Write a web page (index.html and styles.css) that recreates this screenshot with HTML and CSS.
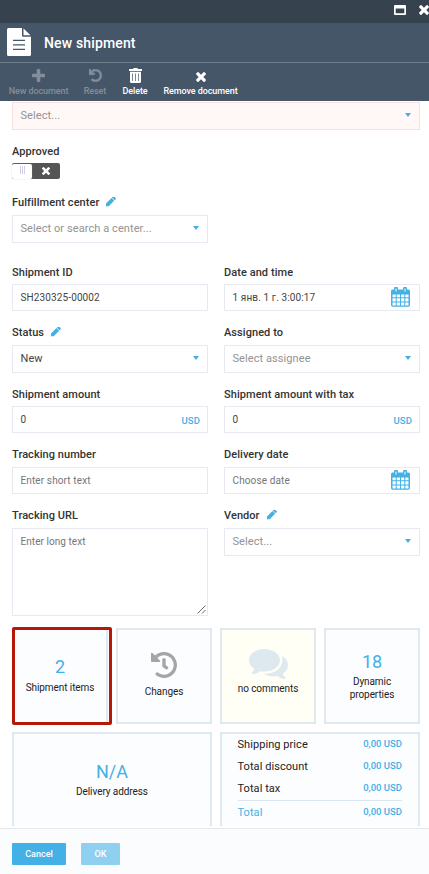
FILE: index.html
```
<!DOCTYPE html>
<html lang="en">
<head>
<meta charset="utf-8">
<title>New shipment</title>
<link rel="stylesheet" href="styles.css">
</head>
<body>
<svg class="defs" width="0" height="0">
  <symbol id="pencil" viewBox="128 256 1536 1536"><path d="M1014 608L1700 608z"/><path d="M960 416l416 416-832 832h-416v-416zm683 96q0 53-37 90l-166 166-416-416 166-165q36-38 90-38 53 0 91 38l235 234q37 39 37 91z"/></symbol>
  <symbol id="close" viewBox="302 366 1188 1188"><path d="M1490 1322q0 40-28 68l-136 136q-28 28-68 28t-68-28l-294-294-294 294q-28 28-68 28t-68-28l-136-136q-28-28-28-68t28-68l294-294-294-294q-28-28-28-68t28-68l136-136q28-28 68-28t68 28l294 294 294-294q28-28 68-28t68 28l136 136q28 28 28 68t-28 68l-294 294 294 294q28 28 28 68z"/></symbol>
  <symbol id="calendar" viewBox="0 0 19 20"><path fill-rule="evenodd" d="M1.5 2.5H3V1.5a1.5 1.5 0 0 1 4 0v1h5v-1a1.500 1.500 0 0 1 4 0v1h1.500A1.500 1.500 0 0 1 19 4v14a1.800 1.800 0 0 1-1.800 1.800H1.800A1.800 1.800 0 0 1 0 18V4a1.500 1.500 0 0 1 1.500-1.500zM4.500 1.500v3h1v-3zM13.500 1.500v3h1v-3zM1.500 7.500v2.700h3.200V7.500zM5.700 7.500v2.700h3.300V7.500zM10 7.500v2.700h3.300V7.500zM14.300 7.500v2.700h3.200V7.500zM1.500 11.200v3.200h3.200v-3.200zM5.700 11.200v3.200h3.300v-3.200zM10 11.200v3.200h3.300v-3.200zM14.300 11.200v3.200h3.200v-3.200zM1.500 15.400v3h3.200v-3zM5.700 15.400v3h3.300v-3zM10 15.400v3h3.300v-3zM14.300 15.400v3h3.200v-3z"/></symbol>
</svg>

<div class="window-bar">
  <svg class="win-max" viewBox="0 0 12 10"><path fill-rule="evenodd" d="M1 0h10a1 1 0 0 1 1 1v8a1 1 0 0 1-1 1H1a1 1 0 0 1-1-1V1a1 1 0 0 1 1-1zM1.700 3.500v4.800h8.600V3.500z"/></svg>
  <svg class="win-close"><use href="#close"/></svg>
</div>
<header class="title-bar">
  <svg class="doc-icon" viewBox="0 0 24 28"><path fill-rule="evenodd" d="M1.500 0H15v7.500a1.300 1.300 0 0 0 1.300 1.300H24v17.700a1.500 1.500 0 0 1-1.500 1.500h-21A1.500 1.500 0 0 1 0 26.500v-25A1.500 1.500 0 0 1 1.500 0zM6 11.700v1.300h12v-1.300zM6 16.200v1.300h12v-1.300zM6 20.700v1.300h12v-1.300z"/><path d="M16.500.5l7 6.800h-7z"/></svg>
  <h1>New shipment</h1>
</header>
<nav class="toolbar">
  <div class="tool disabled tool-new"><svg viewBox="192 128 1408 1408"><path d="M1600 736v192q0 40-28 68t-68 28h-416v416q0 40-28 68t-68 28h-192q-40 0-68-28t-28-68v-416h-416q-40 0-68-28t-28-68v-192q0-40 28-68t68-28h416v-416q0-40 28-68t68-28h192q40 0 68 28t28 68v416h416q40 0 68 28t28 68z"/></svg><span>New document</span></div>
  <div class="tool disabled tool-reset"><svg class="undo" viewBox="0 0 512 512"><path d="M212.333 224.333H12c-6.627 0-12-5.373-12-12V12C0 5.373 5.373 0 12 0h48c6.627 0 12 5.373 12 12v78.112C117.773 39.279 184.260 7.470 258.175 8.007c136.906.994 246.448 111.623 246.157 248.532C504.041 393.258 393.120 504 256.333 504c-64.089 0-122.496-24.313-166.510-64.215-5.099-4.622-5.334-12.554-.467-17.420l33.967-33.967c4.474-4.474 11.662-4.717 16.401-.525C170.760 415.336 211.580 432 256.333 432c97.268 0 176-78.716 176-176 0-97.267-78.716-176-176-176-58.496 0-110.280 28.476-142.274 72.333h98.274c6.627 0 12 5.373 12 12v48c0 6.627-5.373 12-12 12z"/></svg><span>Reset</span></div>
  <div class="tool tool-delete"><svg viewBox="0 0 13 15"><path fill-rule="evenodd" d="M0 1h4l.8-1h3.400L9 1h4v2H0zM1 3.700h11V13.500A1.500 1.500 0 0 1 10.500 15h-8A1.500 1.500 0 0 1 1 13.500zM3.300 5.500v7.500h.7V5.500zM6.150 5.500v7.500h.7V5.500zM9 5.500v7.500h.7V5.500z"/></svg><span>Delete</span></div>
  <div class="tool tool-remove"><svg><use href="#close"/></svg><span>Remove document</span></div>
</nav>

<main class="content">
  <div class="control select required"><span class="hint">Select...</span><i class="caret"></i></div>
  <div class="form">
    <div class="field wide"><label>Approved</label>
      <div class="switch"><span class="knob"><i></i><i></i><i></i></span><svg><use href="#close"/></svg></div></div>
    <div class="field gap"><label>Fulfillment center<svg class="edit"><use href="#pencil"/></svg></label>
      <div class="control select"><span class="hint">Select or search a center...</span><i class="caret"></i></div></div>
    <div></div>
    <div class="field"><label>Shipment ID</label><div class="control input"><span>SH230325-00002</span></div></div>
    <div class="field"><label>Date and time</label><div class="control input"><span>1 янв. 1 г. 3:00:17</span><svg class="cal"><use href="#calendar"/></svg></div></div>
    <div class="field gap"><label>Status<svg class="edit"><use href="#pencil"/></svg></label><div class="control select"><span>New</span><i class="caret"></i></div></div>
    <div class="field gap"><label>Assigned to</label><div class="control select"><span class="hint">Select assignee</span><i class="caret"></i></div></div>
    <div class="field"><label>Shipment amount</label><div class="control input"><span>0</span><b class="unit">USD</b></div></div>
    <div class="field"><label>Shipment amount with tax</label><div class="control input"><span>0</span><b class="unit">USD</b></div></div>
    <div class="field gap"><label>Tracking number</label><div class="control input"><span class="ph">Enter short text</span></div></div>
    <div class="field gap"><label>Delivery date</label><div class="control input"><span class="ph">Choose date</span><svg class="cal"><use href="#calendar"/></svg></div></div>
    <div class="field gap"><label>Tracking URL</label><div class="control area"><span class="ph">Enter long text</span><svg class="grip" viewBox="0 0 9 9"><path d="M.5 8.500l8-8M5 8.500l3.500-3.500"/></svg></div></div>
    <div class="field gap"><label>Vendor<svg class="edit"><use href="#pencil"/></svg></label><div class="control select"><span class="hint">Select...</span><i class="caret"></i></div></div>
  </div>

  <div class="tiles">
    <section class="tile marked"><strong>2</strong><span>Shipment items</span></section>
    <section class="tile"><svg class="history" viewBox="8 8 496 496"><path d="M504 255.531c.253 136.640-111.180 248.372-247.820 248.468-59.015.042-113.223-20.530-155.822-54.911-11.077-8.940-11.905-25.541-1.839-35.607l11.267-11.267c8.609-8.609 22.353-9.551 31.891-1.984C173.062 425.135 212.781 440 256 440c101.705 0 184-82.311 184-184 0-101.705-82.311-184-184-184-48.814 0-93.149 18.969-126.068 49.932l50.754 50.754c10.080 10.080 2.941 27.314-11.313 27.314H24c-8.837 0-16-7.163-16-16V38.627c0-14.254 17.234-21.393 27.314-11.314l49.372 49.372C129.209 34.136 189.552 8 256 8c136.810 0 247.747 110.780 248 247.531zm-180.912 78.784l9.823-12.630c8.138-10.463 6.253-25.542-4.210-33.679L288 256.349V152c0-13.255-10.745-24-24-24h-16c-13.255 0-24 10.745-24 24v135.651l65.409 50.874c10.463 8.137 25.541 6.253 33.679-4.210z"/></svg><span>Changes</span></section>
    <section class="tile note"><svg class="comments" viewBox="0 0 39 31"><path d="M15.500 0C24 0 31 5 31 11.300S24 22.600 15.500 22.600q-2.200 0-4.300-.4Q7.500 24.800 3 24.900q-.8-.2 0-1.200 2-1.700 2.500-3.700Q0 16.700 0 11.300C0 5 7 0 15.500 0z"/><path d="M33 7q6 3.500 6 9 0 5.300-5.300 8.700.5 2 2.500 3.700.8 1-.2 1.500-4.300-.2-8-2.800-7.500 1.200-13.500-2.300Q25 25 30 19.500 34.800 14 33 7z"/></svg><span>no comments</span></section>
    <section class="tile props"><strong>18</strong><span>Dynamic properties</span></section>
    <section class="tile double"><strong>N/A</strong><span>Delivery address</span></section>
    <section class="tile double totals">
      <div class="line"><span>Shipping price</span><b>0,00 USD</b></div>
      <div class="line"><span>Total discount</span><b>0,00 USD</b></div>
      <div class="line"><span>Total tax</span><b>0,00 USD</b></div>
      <div class="line sum"><span>Total</span><b>0,00 USD</b></div>
    </section>
  </div>
</main>
<footer class="actions"><button>Cancel</button><button class="off">OK</button></footer>
</body>
</html>
```
FILE: styles.css
```
*, *::after { box-sizing: border-box; }
body { margin: 0; width: 429px; height: 874px; overflow: hidden; display: flex; flex-direction: column; background: #fff; color: #333; font-family: Roboto, "Noto Sans", sans-serif; font-size: 11px; }
svg { display: block; fill: currentColor; flex: none; }
.defs { position: absolute; }

.window-bar { flex: none; height: 23px; background: #36434f; color: #fff; display: flex; justify-content: flex-end; gap: 13px; padding: 5px 0 0; }
.win-max { width: 12px; height: 10px; }
.win-close { width: 10px; height: 10px; }
.title-bar { flex: none; height: 40px; background: #465669; border-bottom: 1px solid #707d8b; color: #fff; display: flex; padding: 5px 7px 0; gap: 13px; }
.doc-icon { width: 24px; height: 28px; }
h1 { margin: 0; font-size: 14px; line-height: 30px; font-weight: 500; letter-spacing: .15px; }
.toolbar { flex: none; height: 38px; background: #465669; color: #fff; display: flex; padding-left: 9px; }
.tool { display: flex; flex-direction: column; align-items: center; justify-content: space-between; padding: 5px 0 4px; font-size: 9px; font-weight: 500; line-height: 12px; letter-spacing: -.08px; white-space: nowrap; }
.disabled { color: #838e9a; }
.tool svg { height: 13px; width: 13px; margin-top: 1px; }
.tool-new { width: 59px; }
.tool-reset { width: 24px; margin-left: 15px; }
.tool-delete { width: 26px; margin-left: 15px; }
.tool-remove { width: 75px; margin-left: 15px; }
.tool-delete svg { height: 15px; margin-top: 0; }
.tool-remove svg { width: 10px; height: 10px; margin-top: 4px; }
.undo { stroke: currentColor; stroke-width: 20px; }

.content { flex: none; height: 725px; overflow: hidden; padding: 1px 9px 0 12px; }
.control { display: flex; justify-content: space-between; border: 1px solid #e8e8f1; padding: 0 8px; background: #fff; color: #444; }
.select { height: 28px; line-height: 25px; letter-spacing: .08px; padding-left: 7.5px; }
.input { height: 27px; line-height: 26px; font-size: 10px; letter-spacing: .12px; padding-left: 7.5px; }
.area { height: 88px; line-height: 26px; font-size: 10px; letter-spacing: .05px; padding: 0 1px 0 7.500px; }
.hint { color: #939393; }
.ph { color: #757575; }
.required { background: #fff8f6; border-color: #fbdfdf; }
.caret { border: 3px solid transparent; border-top: 4px solid #43b0e6; border-bottom: 0; margin-top: 10px; height: 4px; }
.form { display: grid; grid-template-columns: 196px 196px; column-gap: 16px; grid-template-rows: 51px 70px 60px 62px 60px 61px 121px; padding-top: 13px; }
.field label { display: flex; height: 16px; line-height: 18px; font-weight: 500; letter-spacing: .06px; margin-bottom: 4px; white-space: nowrap; }
.gap label { margin-bottom: 5px; }
.wide { grid-column: span 2; }
.edit { width: 10px; height: 10px; margin: 3px 0 0 7px; color: #43b0e6; }
.cal { width: 19px; height: 20px; margin: 2px 1px 0 0; color: #43b0e6; }
.unit { color: #43b0e6; font-size: 9.5px; font-weight: 500; line-height: 28px; margin-right: -1px; }
.grip { width: 9px; height: 9px; align-self: flex-end; margin-bottom: 1px; stroke: #444; stroke-width: .8; fill: none; }
.switch { width: 48px; height: 16px; background: #555; border-radius: 2px; display: flex; color: #fff; }
.knob { width: 20px; height: 15px; margin-top: 1px; border-radius: 2px; background: #fff; box-shadow: 0 0 1px #aaa; display: flex; justify-content: center; gap: 1px; padding-top: 2px; }
.knob i { width: 1px; height: 8px; background: #cfcfe8; }
.switch svg { width: 8px; height: 8px; margin: 4px 0 0 10px; }

.tiles { display: grid; grid-template-columns: repeat(4, 96px); grid-auto-rows: 96px; gap: 8px; }
.tile { position: relative; border: 2px solid #dfe9ef; background: #fcfdff; display: flex; flex-direction: column; align-items: center; justify-content: center; text-align: center; font-size: 10px; line-height: 13px; letter-spacing: -.08px; color: #222; padding: 0 18px 3px; }
.tile > span { white-space: nowrap; }
.tile strong { font-size: 18px; line-height: 24px; font-weight: 400; letter-spacing: 0; color: #43b0e6; margin-bottom: 2px; }
.double strong { margin-bottom: 1px; }
.props { padding-bottom: 2px; }
.props > span { white-space: normal; }
.props strong { margin-bottom: 1px; }
.marked::after { content: ""; position: absolute; left: -2px; top: -3px; width: 100px; height: 98px; border: 3px solid #b51807; border-radius: 2px; }
.note { background: #fffff5; padding-bottom: 9px; }
.history { width: 26px; height: 26px; color: #a5a5a5; margin: 1px 0 7px; }
.comments { width: 39px; height: 31px; color: #dee8ef; margin-bottom: 2px; }
.double { grid-column: span 2; }
.totals { padding: 0 16px 0 15.500px; align-items: stretch; justify-content: flex-start; }
.line { display: flex; justify-content: space-between; height: 22px; line-height: 21px; font-size: 11px; letter-spacing: .06px; white-space: nowrap; }
.line b { font-size: 9.500px; font-weight: 500; letter-spacing: 0; color: #43b0e6; line-height: 20px; }
.sum { border-top: 1px solid #dce6ef; color: #43b0e6; height: 24px; line-height: 23px; }
.sum b { line-height: 22px; }

.actions { margin-top: 2px; flex: 1; border-top: 1px solid #e5e8ed; background: #fbfcfe; padding: 14px 12px; display: flex; gap: 15px; align-items: flex-start; }
button { width: 54px; height: 22px; border: 0; border-radius: 1px; padding: 0; background: #43b0e6; color: #fff; font: 500 9px/22px Roboto, sans-serif; }
button.off { width: 39px; background: #8fd0f1; }
```
